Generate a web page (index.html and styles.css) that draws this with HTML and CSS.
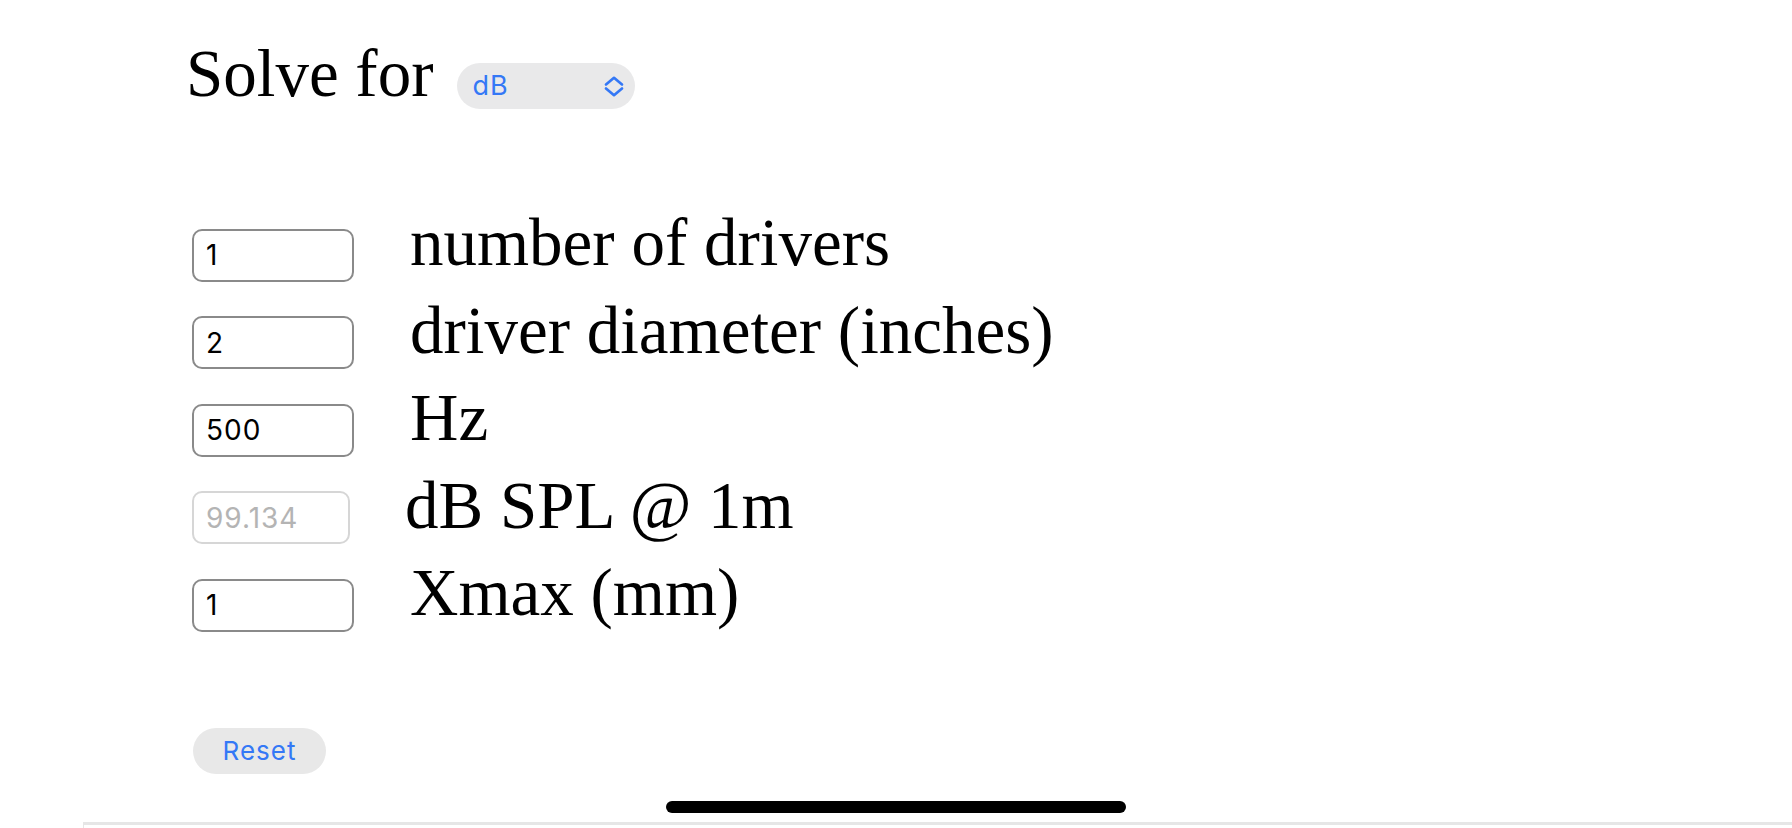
FILE: index.html
```html
<!DOCTYPE html>
<html>
	<head>
		<meta charset="UTF-8">
		<title>Driver SPL</title>
		<link rel="stylesheet" href="styles.css">
	</head>
	<body>
		<div class="calc">
			<div class="solve">
				<span>Solve for</span>
				<div class="pick">
					<select>
						<option>dB</option>
						<option>Xmax</option>
						<option>Hz</option>
					</select>
					<svg class="chev" width="20" height="21" viewBox="0 0 20 21">
						<path d="M2 8.5 L10 1.8 L18 8.5 M2 12.5 L10 19.2 L18 12.5" fill="none" stroke="#3478f6" stroke-width="2.7" stroke-linecap="round" stroke-linejoin="round"/>
					</svg>
				</div>
			</div>

			<div class="rows">
				<div class="row">
					<input type="text" value="1">
					<label>number of drivers</label>
				</div>
				<div class="row">
					<input type="text" value="2">
					<label>driver diameter (inches)</label>
				</div>
				<div class="row">
					<input type="text" value="500">
					<label>Hz</label>
				</div>
				<div class="row">
					<input type="text" class="off" value="99.134" disabled>
					<label class="lbl-off">dB SPL @ 1m</label>
				</div>
				<div class="row">
					<input type="text" value="1">
					<label>Xmax (mm)</label>
				</div>
			</div>

			<button class="reset">Reset</button>
		</div>
		<div class="next"></div>
		<div class="home-bar"></div>
	</body>
</html>
```

FILE: styles.css
```css
body{
	margin: 0;
	background: #fff;
	font-family: "Liberation Serif", "Times New Roman", serif;
	color: #000;
}
.calc{
	padding: 35px 0 0 186px;
}
.solve{
	display: flex;
	align-items: baseline;
	font-size: 67px;
}
.pick{
	position: relative;
	margin-left: 23px;
	width: 178px;
	font-size: 0;
	line-height: 0;
	top: -1px;
}
.pick select{
	appearance: none;
	-webkit-appearance: none;
	width: 100%;
	height: 46px;
	box-sizing: border-box;
	padding: 0 0 0 16px;
	border: 0;
	border-radius: 23px;
	background: #e9e9ea;
	color: #3478f6;
	font: 27px/30px Inter, "Liberation Sans", sans-serif;
	letter-spacing: 1px;
	outline: none;
}
.chev{
	position: absolute;
	right: 11px;
	top: 13px;
	pointer-events: none;
}
.rows{
	display: flex;
	flex-direction: column;
	gap: 10px;
	margin: 92px 0 0 6px;
}
.row{
	display: flex;
	align-items: baseline;
	gap: 56px;
}
.row input{
	width: 162px;
	height: 53px;
	box-sizing: border-box;
	padding: 0 12px;
	border: 2px solid #8a8a8a;
	border-radius: 10px;
	background: #fff;
	color: #000;
	font: 28px Inter, "Liberation Sans", sans-serif;
	letter-spacing: 1px;
	outline: none;
}
.row input.off{
	width: 158px;
	border-color: #d6d6d6;
	color: #b4b4b4;
}
.row label{
	font-size: 67px;
	white-space: nowrap;
}
.row .lbl-off{
	margin-left: -1px;
}
.reset{
	display: block;
	margin: 96px 0 0 7px;
	width: 133px;
	height: 46px;
	padding: 0;
	border: 0;
	border-radius: 23px;
	background: #e8e8e8;
	color: #3478f6;
	font: 26px/30px Inter, "Liberation Sans", sans-serif;
	letter-spacing: 1px;
}
.next{
	margin: 48px 0 0 83px;
	height: 40px;
	border-top: 3px solid #e6e6e6;
	border-left: 1px solid #e6e6e6;
}
.home-bar{
	position: fixed;
	left: 666px;
	top: 801px;
	width: 460px;
	height: 12px;
	border-radius: 6px;
	background: #000;
}
```
